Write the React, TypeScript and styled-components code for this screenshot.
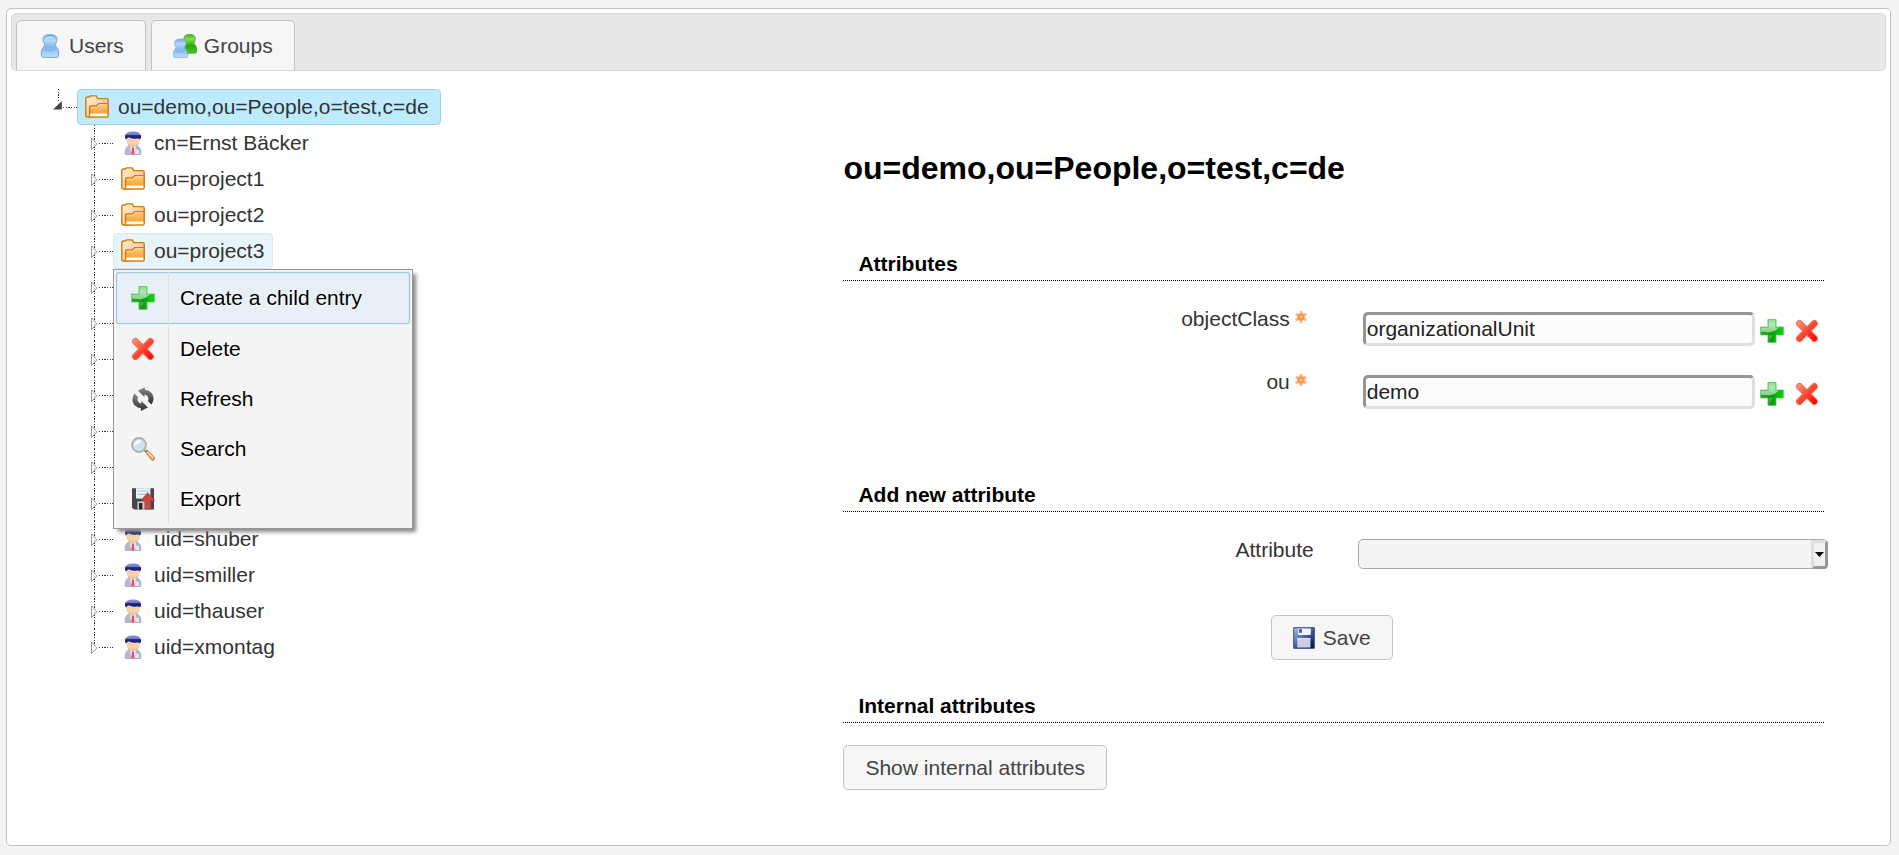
import React from 'react';
import styled, { createGlobalStyle, css } from 'styled-components';

const GlobalStyle = createGlobalStyle`
  * { box-sizing: border-box; }
  body {
    margin: 0;
    background: #f4f4f4;
    color: #333;
    font-family: "Liberation Sans", Arial, sans-serif;
    font-size: 21px;
    line-height: 24px;
  }
  button, input, select { font: inherit; color: inherit; margin: 0; }
`;

const Page = styled.main`
  padding: 8px 8px 10px 6px;
`;

const Panel = styled.div`
  background: #fff;
  border: 1px solid #c2c2c2;
  border-radius: 5px;
  padding: 4px;
`;

const TabBar = styled.div`
  display: flex;
  gap: 5px;
  padding: 6px 4px 0;
  background: #e8e8e8;
  border: 1px solid #d9d9d9;
  border-radius: 5px;
`;

const Tab = styled.button`
  display: flex;
  align-items: center;
  gap: 7px;
  height: 50px;
  padding: 0 21px;
  color: #444;
  background: #f6f6f6;
  border: 1px solid #c2c2c2;
  border-bottom: 0;
  border-radius: 5px 5px 0 0;
`;

const Columns = styled.div`
  display: grid;
  grid-template-columns: minmax(0, 832fr) minmax(0, 1042fr);
`;

const TreePane = styled.nav`
  padding: 18px 0 0 42px;
`;

const TreeList = styled.ul<{ $nested?: boolean }>`
  list-style: none;
  margin: 0;
  padding: 0 0 0 ${p => (p.$nested ? 36 : 0)}px;
`;

const TreeRow = styled.div`
  display: flex;
  position: relative;
  height: 36px;
`;

const NodeAnchor = styled.div`
  position: relative;
`;

const NodeLabel = styled.button<{ $state?: 'selected' | 'hover' }>`
  display: flex;
  align-items: center;
  gap: 9px;
  height: 36px;
  padding: 0 8px 0 7px;
  background: none;
  border: 1px solid transparent;
  border-radius: 4px;
  color: #333;
  white-space: nowrap;
  ${p => p.$state === 'selected' && css`
    padding-right: 11px;
    background: #beebff;
    border-color: #a3d0e2;
  `}
  ${p => p.$state === 'hover' && css`
    background: #e7f4f9;
    border-color: #d8eaf0;
  `}
`;

const Menu = styled.ul`
  position: absolute;
  top: 36px;
  left: 0;
  z-index: 2;
  width: 300px;
  margin: 0;
  padding: 2px 2px 4px;
  list-style: none;
  background: #f4f4f4;
  border: 1px solid #979797;
  box-shadow: 4px 4px 4px -1px #888;
`;

const MenuItem = styled.button<{ $active?: boolean }>`
  display: grid;
  grid-template-columns: 52px 1fr;
  width: 100%;
  height: 50px;
  padding: 0;
  text-align: left;
  color: #000;
  text-shadow: 1px 1px 1px #fff;
  background: none;
  border: 1px solid transparent;
  border-radius: 3px;
  ${p => p.$active && css`
    height: 52px;
    background: #e8eff7;
    border-color: #99cbe4;
    box-shadow: inset 0 0 1px #99cbe4, 0 0 1px #99cbe4;
  `}
`;

const MenuIcon = styled.span`
  display: flex;
  align-items: center;
  justify-content: center;
  margin: -1px 0;
  padding-left: 1px;
  border-right: 1px solid #e0e0e0;
`;

const MenuText = styled.span`
  align-self: center;
  padding-left: 11px;
`;

const FormPane = styled.form`
  padding: 0 58px 51px 0;
`;

const Title = styled.h1`
  margin: 0;
  padding: 77px 0 64px;
  font-size: 32px;
  line-height: 40px;
  color: #000;
`;

const SectionTitle = styled.h2`
  margin: 0 4px 0 0;
  padding: 0 15px 4px;
  font-size: 21px;
  line-height: 24px;
  color: #000;
  border-bottom: 1px dotted #000;
`;

const Section = styled.section<{ $gap: number }>`
  padding-bottom: ${p => p.$gap}px;
`;

const Fields = styled.div`
  display: grid;
  gap: 24px;
  padding-top: 26px;
`;

const FieldRow = styled.div`
  display: grid;
  grid-template-columns: minmax(0, 471fr) minmax(0, 515fr);
`;

const FieldLabel = styled.label<{ $required?: boolean }>`
  display: flex;
  justify-content: flex-end;
  gap: 5px;
  padding-right: ${p => (p.$required ? 7 : 0)}px;
`;

const Control = styled.div`
  display: flex;
  align-items: center;
  gap: 5px;
  padding: 5px 0 0 49px;
`;

const TextInput = styled.input`
  flex: 1;
  min-width: 0;
  height: 34px;
  padding: 0 1px;
  color: #222;
  background: #fcfcfc;
  border: 3px solid;
  border-color: #959595 #dfdfdf #dfdfdf #959595;
  border-radius: 5px;
`;

const IconButton = styled.button`
  display: flex;
  padding: 4px 0 0;
  background: none;
  border: 0;
`;

const IconButtons = styled.div`
  display: flex;
  gap: 11px;
  padding-right: 9px;
`;

const SelectWrap = styled.div`
  position: relative;
  display: flex;
  margin: 1px 0 0 44px;
`;

const Select = styled.select`
  appearance: none;
  width: 100%;
  height: 30px;
  background: #f4f4f4;
  border: 1px solid #a9a9a9;
  border-radius: 5px;
`;

const SelectArrow = styled.span`
  position: absolute;
  top: 1px;
  right: 0;
  bottom: 0;
  display: flex;
  align-items: center;
  justify-content: center;
  width: 17px;
  pointer-events: none;
  background: #f0f0f0;
  border: 3px solid;
  border-color: #dfdfdf #959595 #959595 #dfdfdf;
  border-radius: 0 4px 4px 0;
`;

const Actions = styled.div`
  display: flex;
  justify-content: center;
  padding: 46px 8px 0 0;
`;

const Button = styled.button`
  display: flex;
  align-items: center;
  gap: 8px;
  height: 45px;
  padding: 0 21px;
  color: #444;
  background: #f6f6f6;
  border: 1px solid #c2c2c2;
  border-radius: 5px;
`;

const Internal = styled.div`
  padding-top: 22px;
`;

const RequiredIcon = styled.svg`
  margin-top: 4px;
`;

const Gradients = () => (
  <svg width="0" height="0" style={{ display: 'block' }} aria-hidden="true">
    <defs>
      <linearGradient id="gPlus" x1="0" y1="0" x2="1" y2="0">
        <stop offset="0" stopColor="#2f9f2f" /><stop offset="0.5" stopColor="#109a10" />
        <stop offset="1" stopColor="#00dc08" />
      </linearGradient>
      <linearGradient id="gPlusShine" x1="0" y1="0" x2="0" y2="1">
        <stop offset="0" stopColor="#8fe08f" /><stop offset="0.4" stopColor="#b4e6b4" /><stop offset="1" stopColor="#7fd07f" />
      </linearGradient>
      <linearGradient id="gRed" gradientUnits="userSpaceOnUse" x1="2" y1="2" x2="21" y2="21">
        <stop offset="0" stopColor="#ff9a80" /><stop offset="0.5" stopColor="#fb4a30" /><stop offset="1" stopColor="#ff0000" />
      </linearGradient>
      <linearGradient id="gBlue" x1="0" y1="0" x2="0" y2="1">
        <stop offset="0" stopColor="#74ade6" /><stop offset="0.25" stopColor="#b5d9fb" /><stop offset="0.55" stopColor="#80b8f0" /><stop offset="1" stopColor="#bfdfff" />
      </linearGradient>
      <linearGradient id="gGreen" x1="0" y1="0" x2="0" y2="1">
        <stop offset="0" stopColor="#4fae30" /><stop offset="0.25" stopColor="#7fe04a" /><stop offset="0.6" stopColor="#2ca80c" /><stop offset="1" stopColor="#3fd010" />
      </linearGradient>
      <linearGradient id="gFolder" x1="0" y1="0" x2="0" y2="1">
        <stop offset="0" stopColor="#ffcb80" /><stop offset="1" stopColor="#ff9414" />
      </linearGradient>
      <linearGradient id="gFolderBack" x1="0" y1="0" x2="1" y2="1">
        <stop offset="0" stopColor="#fff0da" /><stop offset="1" stopColor="#fbb260" />
      </linearGradient>
      <linearGradient id="gHair" x1="0" y1="0" x2="0" y2="1">
        <stop offset="0" stopColor="#8c96d4" /><stop offset="0.4" stopColor="#6c78c0" /><stop offset="0.5" stopColor="#20268a" /><stop offset="1" stopColor="#181c70" />
      </linearGradient>
      <linearGradient id="gDisk" x1="0" y1="0" x2="1" y2="1">
        <stop offset="0" stopColor="#a9c4ea" /><stop offset="0.5" stopColor="#4660a0" /><stop offset="1" stopColor="#06063c" />
      </linearGradient>
      <linearGradient id="gDark" x1="0" y1="0" x2="0" y2="1">
        <stop offset="0" stopColor="#8a8a8a" /><stop offset="1" stopColor="#2c2c2c" />
      </linearGradient>
      <linearGradient id="gArrow" x1="0" y1="0" x2="0" y2="1">
        <stop offset="0" stopColor="#d83c38" /><stop offset="1" stopColor="#b85450" />
      </linearGradient>
    </defs>
  </svg>
);

const Icon = ({ children, size = 24 }: { children: React.ReactNode; size?: number }) => (
  <svg width={size} height={size} viewBox="0 0 24 24" aria-hidden="true">{children}</svg>
);

const pawn = 'M12 .6C16 .6 19 2 19 5.2C19 8 17.4 9.4 17.2 11.4C18.4 13.3 20.7 15 20.7 19.6V21C20.7 22.6 19.4 23.4 17.9 23.4H6.1C4.6 23.4 3.3 22.6 3.3 21V19.6C3.3 15 5.6 13.3 6.8 11.4C6.6 9.4 5 8 5 5.2C5 2 8 .6 12 .6Z';

const UserIcon = () => (
  <Icon>
    <path d={pawn} fill="url(#gBlue)" stroke="#7ba5d3" />
    <path d="M8 4.6C9.5 3.2 14.5 3.2 16 4.6" stroke="#d9ecff" fill="none" />
    <path d="M7.5 15C9 17 15 17 16.5 15" stroke="#6fa5df" fill="none" />
  </Icon>
);

const GroupIcon = () => (
  <Icon>
    <g transform="translate(6.8 0) scale(.82)"><path d={pawn} fill="url(#gGreen)" stroke="#4c9c38" /></g>
    <g transform="translate(-2.4 4.6) scale(.82)">
      <path d={pawn} fill="url(#gBlue)" stroke="#7ba5d3" />
      <path d="M7.5 15C9 17 15 17 16.5 15" stroke="#6fa5df" fill="none" />
    </g>
  </Icon>
);

const FolderIcon = () => (
  <Icon>
    <path d="M.8 21V3.6C.8 2.8 1.4 2 2.4 2H4.2L5.4.9H11.2L12.6 3.6H21.6C22.6 3.6 23.2 4.2 23.2 5V12H8V22H2.4C1.5 22 .8 21.6 .8 21Z" fill="url(#gFolderBack)" stroke="#c87c14" strokeWidth="1.4" />
    <path d="M4.6 12.2C4.6 11.4 5.2 11 6 11H11.4L13.6 8.6H21.8C22.8 8.6 23.2 9 23.2 9.8V20.6C23.2 21.6 22.8 22.1 21.8 22.1H3.4C4.4 21.9 4.6 21.4 4.6 20.4Z" fill="url(#gFolder)" stroke="#c87c14" strokeWidth="1.4" />
    <path d="M5.4 18.4H22.4V21.3H4.8Z" fill="#fffdf5" />
    <path d="M5.8 12.2H12L14.2 9.8H22.2" stroke="#ffe8c4" strokeWidth=".8" fill="none" />
  </Icon>
);

const PersonIcon = () => (
  <Icon>
    <path d="M4.1 22.4C4.1 17 6.6 14.2 12 14.2C17.4 14.2 19.9 17 19.9 22.4C19.9 23.2 19.5 23.6 18.8 23.6H5.2C4.5 23.6 4.1 23.2 4.1 22.4Z" fill="#b4b6d2" stroke="#9a9ab6" strokeWidth=".7" />
    <path d="M9 14.8H15L13.8 23.2H10.2Z" fill="#ececf6" />
    <path d="M14.2 18.8H18V23H14.6Z" fill="#e4e4f0" />
    <path d="M10.7 16.4H13.1L12.9 18L13.4 23.2H10.2L11 18Z" fill="#f04848" />
    <ellipse cx="12" cy="9.4" rx="6.8" ry="6.2" fill="#f8d2a6" />
    <path d="M7 12.8C9 16 15 16 17 12.8" stroke="#e0ae80" strokeWidth=".8" fill="none" />
    <path d="M4 5.4C4 2.2 7.4.5 12 .5C16.6.5 20 2.2 20 5.4C20.1 6.8 19.6 7.8 19 8.6C18.4 7.8 17.6 7.6 16.6 7.6C13 8 9.6 7.4 8 6.2C6.4 6.8 5.6 7.6 5 8.6C4.4 7.8 4 6.8 4 5.4Z" fill="url(#gHair)" />
  </Icon>
);

const PlusIcon = () => (
  <Icon>
    <path d="M7.9.5H16.1V7.9H23.5V16.1H16.1V23.5H7.9V16.1H.5V7.9H7.9Z" fill="url(#gPlus)" stroke="#6cc86c" strokeWidth=".7" />
    <path d="M8.4 1H15.6V8.4H19C17 10 14.6 12.4 11 13C7.4 13.6 4 13 1 12.8V8.4H8.4Z" fill="url(#gPlusShine)" />
    <path d="M9.2 16H12.4C11.8 18.6 10.8 20 9.2 21Z" fill="#38b838" />
  </Icon>
);

const CrossIcon = () => (
  <Icon>
    <path d="M4.5 4.5L19.4 19.5M19.4 4.5L4.5 19.5" stroke="#e87464" strokeWidth="7" strokeLinecap="round" />
    <path d="M4.5 4.5L19.4 19.5M19.4 4.5L4.5 19.5" stroke="url(#gRed)" strokeWidth="5.2" strokeLinecap="round" />
  </Icon>
);

const RefreshIcon = () => (
  <Icon>
    <path d="M7 3.7L13.8.2L14 2.8C19.6 3.4 22.8 7.6 22.5 11.8C22.3 14.2 21.5 16 20.5 17.4L17 14.2C18.2 11.2 17 8 13.6 7.4L13.4 10Z" fill="url(#gDark)" />
    <path d="M17 20.5L9.8 24L9.8 21C4.2 20.4 1.3 16.4 1.5 12.2C1.7 9.8 2.5 8 3.5 6.6L7 10C5.8 12.8 7 16 10.2 16.6L10.4 14Z" fill="url(#gDark)" />
  </Icon>
);

const SearchIcon = () => (
  <Icon>
    <path d="M14 14.6L16.4 13L23.6 20.4C24 21.4 23 23.4 21.2 23.6Z" fill="#e6a63c" stroke="#9a6a30" strokeWidth=".7" />
    <path d="M16.4 15L22 20.8" stroke="#ffe3a0" strokeWidth="1.2" />
    <path d="M12.6 13.8L14.6 12.4L16.2 14.4L14.6 15.6Z" fill="#888" />
    <circle cx="8" cy="8" r="7" fill="#d4e2ea" stroke="#a9b0b4" strokeWidth="1.8" />
    <path d="M3.4 8C3.8 4.8 6.8 3 10 3.4C8.4 5.8 6 7.4 3.4 8Z" fill="#fff" />
  </Icon>
);

const ExportIcon = () => (
  <Icon>
    <path d="M1 1.2H23V22.6H3.2L1 20.4Z" fill="#48484c" />
    <path d="M5 1.2H19.4V11.6H5Z" fill="#edf4fb" />
    <path d="M6 4H18.4M6 7.4H18.4" stroke="#a8c8e8" strokeWidth="1.2" />
    <path d="M6.4 14.4H17V22.6H6.4Z" fill="#c9c9cb" />
    <path d="M8 16H11.4V22.4H8Z" fill="#2a2a2c" />
    <path d="M16.6 5.6L23.6 13.4H19.8V22.2H13.8V13.4H10Z" fill="url(#gArrow)" stroke="#a93a36" strokeWidth=".6" />
  </Icon>
);

const SaveIcon = () => (
  <Icon size={22}>
    <path d="M.8.8H23.2V23.2H.8Z" fill="url(#gDisk)" stroke="#2b3a74" strokeWidth="1" />
    <path d="M5.4 1.6H19.4V7.4C19.4 8.2 18.8 8.6 18.2 8.6H6.6C5.8 8.6 5.4 8.2 5.4 7.4Z" fill="#f3f7fd" />
    <path d="M6.4 2.2H9.8V6.4H6.4Z" fill="#4a68a8" />
    <path d="M4.6 12.2H19V22.4H4.6Z" fill="#cfcce6" />
    <path d="M4.6 12.8H19" stroke="#f4f4fc" />
  </Icon>
);

const RequiredMark = () => (
  <RequiredIcon width="12" height="12" viewBox="0 0 12 12" role="img" aria-label="required">
    <path d="M6 1.4V10.6M2 3.6L10 8.4M10 3.6L2 8.4" stroke="#fbbd8c" strokeWidth="3.2" strokeLinecap="round" />
    <circle cx="6" cy="6" r="3.8" fill="#f89848" />
    <circle cx="6" cy="6" r="1.4" fill="#ffc488" />
  </RequiredIcon>
);

const Connector = ({ kind }: { kind: 'root' | 'child' | 'last' }) => (
  <svg width="24" height="36" viewBox="0 0 24 36" stroke="#333" aria-hidden="true">
    <g strokeDasharray="1.34 1.33" shapeRendering="crispEdges">
      <path d={kind === 'root' ? 'M5.5 0V13' : kind === 'last' ? 'M5.5 0V19' : 'M5.5 0V36'} />
      <path d="M10 18.5H24" />
    </g>
    {kind === 'root'
      ? <path d="M0 20.5L8.8 12V20.5Z" fill="#444" stroke="none" />
      : <path d="M2.5 13V24.6L8 18.8Z" fill="#fff" fillOpacity=".6" stroke="#999" />}
  </svg>
);

type Entry = { id: string; kind: 'folder' | 'person' | 'covered'; label?: string };

const entries: Entry[] = [
  { id: 'n1', kind: 'person', label: 'cn=Ernst Bäcker' },
  { id: 'n2', kind: 'folder', label: 'ou=project1' },
  { id: 'n3', kind: 'folder', label: 'ou=project2' },
  { id: 'n4', kind: 'folder', label: 'ou=project3' },
  ...Array.from({ length: 7 }, (_, i): Entry => ({ id: `c${i}`, kind: 'covered' })),
  { id: 'n12', kind: 'person', label: 'uid=shuber' },
  { id: 'n13', kind: 'person', label: 'uid=smiller' },
  { id: 'n14', kind: 'person', label: 'uid=thauser' },
  { id: 'n15', kind: 'person', label: 'uid=xmontag' },
];

const menuItems = [
  { label: 'Create a child entry', icon: <PlusIcon /> },
  { label: 'Delete', icon: <CrossIcon /> },
  { label: 'Refresh', icon: <RefreshIcon /> },
  { label: 'Search', icon: <SearchIcon /> },
  { label: 'Export', icon: <ExportIcon /> },
];

const ContextMenu = () => (
  <Menu>
    {menuItems.map((m, i) => (
      <li key={m.label}>
        <MenuItem type="button" $active={i === 0}>
          <MenuIcon>{m.icon}</MenuIcon>
          <MenuText>{m.label}</MenuText>
        </MenuItem>
      </li>
    ))}
  </Menu>
);

const Tree = () => (
  <TreePane aria-label="Directory">
    <TreeList>
      <li>
        <TreeRow>
          <Connector kind="root" />
          <NodeLabel type="button" $state="selected"><FolderIcon />ou=demo,ou=People,o=test,c=de</NodeLabel>
        </TreeRow>
        <TreeList $nested>
          {entries.map((e, i) => (
            <li key={e.id}>
              <TreeRow>
                <Connector kind={i === entries.length - 1 ? 'last' : 'child'} />
                {e.label && (
                  <NodeAnchor>
                    <NodeLabel type="button" $state={e.label === 'ou=project3' ? 'hover' : undefined}>
                      {e.kind === 'folder' ? <FolderIcon /> : <PersonIcon />}
                      {e.label}
                    </NodeLabel>
                    {e.label === 'ou=project3' && <ContextMenu />}
                  </NodeAnchor>
                )}
              </TreeRow>
            </li>
          ))}
        </TreeList>
      </li>
    </TreeList>
  </TreePane>
);

const AttributeField = ({ name, value }: { name: string; value: string }) => (
  <FieldRow>
    <FieldLabel htmlFor={name} $required>{name}<RequiredMark /></FieldLabel>
    <Control>
      <TextInput id={name} defaultValue={value} />
      <IconButtons>
        <IconButton type="button" aria-label={`Add ${name} value`}><PlusIcon /></IconButton>
        <IconButton type="button" aria-label={`Remove ${name} value`}><CrossIcon /></IconButton>
      </IconButtons>
    </Control>
  </FieldRow>
);

export default function App() {
  return (
    <>
      <GlobalStyle />
      <Gradients />
      <Page>
        <Panel>
          <TabBar role="tablist">
            <Tab role="tab" aria-selected="true"><UserIcon />Users</Tab>
            <Tab role="tab" aria-selected="false"><GroupIcon />Groups</Tab>
          </TabBar>
          <Columns>
            <Tree />
            <FormPane onSubmit={e => e.preventDefault()}>
              <Title>ou=demo,ou=People,o=test,c=de</Title>
              <Section $gap={74}>
                <SectionTitle>Attributes</SectionTitle>
                <Fields>
                  <AttributeField name="objectClass" value="organizationalUnit" />
                  <AttributeField name="ou" value="demo" />
                </Fields>
              </Section>
              <Section $gap={34}>
                <SectionTitle>Add new attribute</SectionTitle>
                <Fields>
                  <FieldRow>
                    <FieldLabel htmlFor="attribute">Attribute</FieldLabel>
                    <SelectWrap>
                      <Select id="attribute" />
                      <SelectArrow>
                        <svg width="9" height="5" viewBox="0 0 9 5" aria-hidden="true"><path d="M0 0H9L4.5 5Z" fill="#000" /></svg>
                      </SelectArrow>
                    </SelectWrap>
                  </FieldRow>
                </Fields>
                <Actions><Button type="submit"><SaveIcon />Save</Button></Actions>
              </Section>
              <SectionTitle>Internal attributes</SectionTitle>
              <Internal><Button type="button">Show internal attributes</Button></Internal>
            </FormPane>
          </Columns>
        </Panel>
      </Page>
    </>
  );
}
